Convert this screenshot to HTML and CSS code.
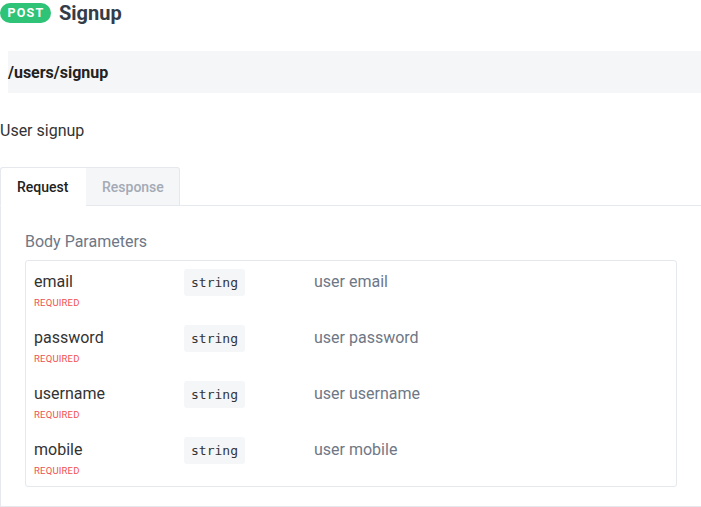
FILE: index.html
```html
<!DOCTYPE html>
<html>
<head>
<meta charset="utf-8">
<link rel="stylesheet" href="styles.css">
</head>
<body>
<div class="page">
  <div class="title">
    <span class="badge">POST</span>
    <h1>Signup</h1>
  </div>
  <div class="endpoint"><span class="path">/users/signup</span></div>
  <p class="desc">User signup</p>
  <div class="tabs">
    <div class="tab active">Request</div>
    <div class="tab">Response</div>
    <div class="tab-rest"></div>
  </div>
  <div class="panel">
    <h2>Body Parameters</h2>
    <div class="params">
      <div class="row">
        <div class="name">email<span class="req">REQUIRED</span></div>
        <div class="type"><code>string</code></div>
        <div class="info">user email</div>
      </div>
      <div class="row">
        <div class="name">password<span class="req">REQUIRED</span></div>
        <div class="type"><code>string</code></div>
        <div class="info">user password</div>
      </div>
      <div class="row">
        <div class="name">username<span class="req">REQUIRED</span></div>
        <div class="type"><code>string</code></div>
        <div class="info">user username</div>
      </div>
      <div class="row">
        <div class="name">mobile<span class="req">REQUIRED</span></div>
        <div class="type"><code>string</code></div>
        <div class="info">user mobile</div>
      </div>
    </div>
  </div>
</div>
</body>
</html>
```
FILE: styles.css
```css
html, body {
  margin: 0;
  padding: 0;
  background: #fff;
  overflow: hidden;
}
body {
  font-family: Roboto, "Liberation Sans", sans-serif;
  color: #333;
}
.page {
  width: 702px;
}
.title {
  display: flex;
  align-items: center;
  height: 25px;
  gap: 8px;
}
.badge {
  display: inline-flex;
  align-items: center;
  justify-content: center;
  background: #2fc377;
  color: #fff;
  font-weight: 700;
  font-size: 12.5px;
  letter-spacing: 1.2px;
  height: 20px;
  width: 51px;
  border-radius: 10px;
  box-sizing: border-box;
  padding-left: 1px;
}
h1 {
  margin: 0;
  font-size: 20px;
  font-weight: 700;
  color: #333c48;
}
.endpoint {
  margin: 26px 0 0 8px;
  height: 42px;
  background: #f5f6f8;
  display: flex;
  align-items: center;
}
.path {
  font-weight: 700;
  font-size: 16px;
  color: #222;
}
.desc {
  margin: 28px 0 0 0;
  font-size: 16px;
  line-height: 20px;
  color: #333;
}
.tabs {
  display: flex;
  margin-top: 26px;
  height: 39px;
}
.tab {
  box-sizing: border-box;
  height: 39px;
  display: flex;
  align-items: center;
  font-size: 14px;
  font-weight: 500;
  border-top: 1px solid #e5e8ec;
  border-right: 1px solid #e5e8ec;
  border-bottom: 1px solid #e5e8ec;
  background: #f5f6f8;
  color: #a3aab5;
  padding: 0 16px;
  width: 94px;
  border-radius: 0 3px 0 0;
}
.tab.active {
  background: #fff;
  color: #222;
  border-left: 1px solid #e5e8ec;
  border-bottom-color: transparent;
  width: 86px;
  border-right: none;
  border-radius: 3px 0 0 0;
}
.tab-rest {
  flex: 1;
  border-bottom: 1px solid #e5e8ec;
}
.panel {
  box-sizing: border-box;
  border: 1px solid #e5e8ec;
  border-top: none;
  padding: 26px 24px 19px 24px;
}
h2 {
  margin: 0;
  font-size: 16px;
  font-weight: 400;
  line-height: 20px;
  color: #6e7786;
}
.params {
  margin-top: 8px;
  border: 1px solid #e5e8ec;
  border-radius: 3px;
  padding: 9px 8px 6px 8px;
  display: flex;
  flex-direction: column;
  gap: 14px;
}
.row {
  display: grid;
  grid-template-columns: 150px 130px 1fr;
  height: 42px;
}
.name {
  display: flex;
  flex-direction: column;
  font-size: 16px;
  line-height: 24px;
  color: #333;
}
.req {
  font-size: 9.5px;
  line-height: 18px;
  color: #f05050;
  letter-spacing: 0.2px;
}
.type code {
  display: inline-block;
  margin-top: -1px;
  font-family: "DejaVu Sans Mono", "Liberation Mono", monospace;
  font-size: 13px;
  line-height: 27px;
  height: 27px;
  padding: 0 7px;
  background: #f5f6f8;
  border-radius: 3px;
  color: #333;
}
.info {
  font-size: 16px;
  line-height: 24px;
  color: #6e7786;
}
```
